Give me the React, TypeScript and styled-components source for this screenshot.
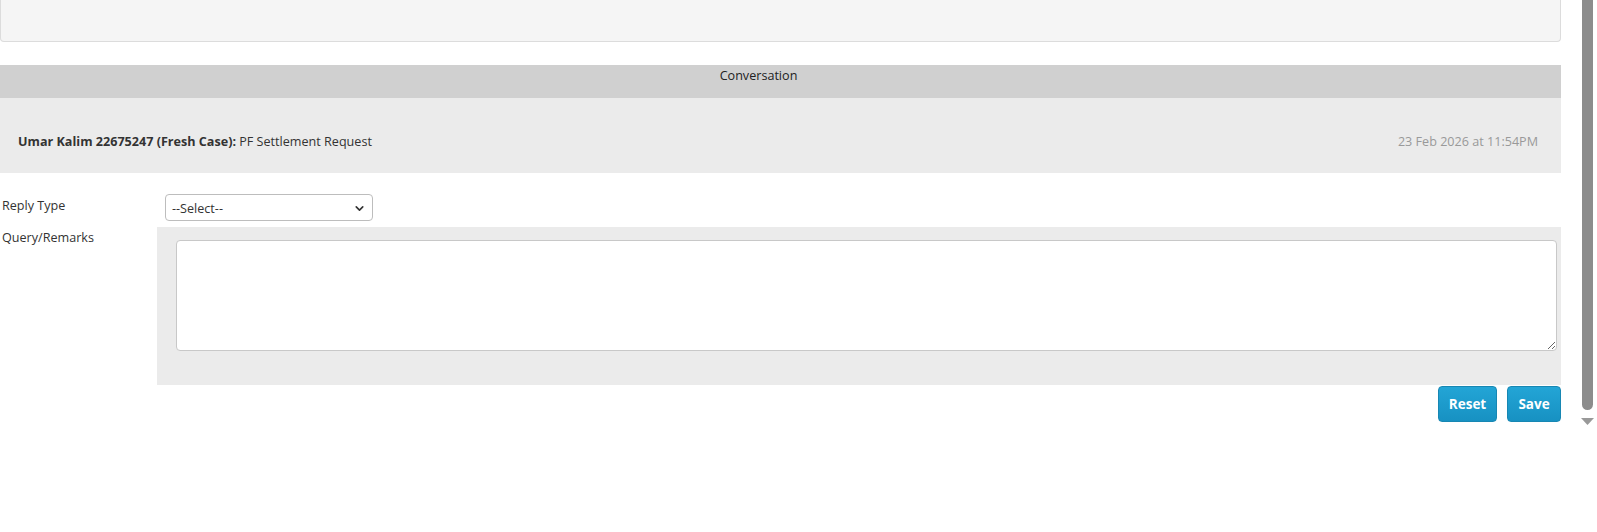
import React from "react";
import styled, { createGlobalStyle } from "styled-components";
import { ChevronDown } from "lucide-react";

const GlobalStyle = createGlobalStyle`
  html, body {
    margin: 0;
    padding: 0;
    background: #fff;
  }
  body {
    font-family: "Open Sans", "Liberation Sans", sans-serif;
    font-size: 12.6px;
    color: #333;
  }
`;

const Page = styled.div`
  display: flex;
  width: 1597px;
  height: 532px;
  overflow: hidden;
`;

const Main = styled.div`
  display: flex;
  flex-direction: column;
  width: 1561px;
`;

const TopPanel = styled.div`
  height: 41px;
  background: #f5f5f5;
  border: 1px solid #dcdcdc;
  border-top: none;
  border-radius: 0 0 4px 4px;
`;

const ConversationHeader = styled.div`
  margin-top: 23px;
  height: 33px;
  box-sizing: border-box;
  padding: 2px 44px 0 0;
  background: #d0d0d0;
  text-align: center;
  line-height: 17px;
  color: #222;
`;

const MessageRow = styled.div`
  display: flex;
  justify-content: space-between;
  height: 75px;
  box-sizing: border-box;
  padding: 35px 23px 0 18px;
  background: #ebebeb;
  line-height: 17px;
`;

const Sender = styled.span`
  font-weight: 700;
`;

const Stamp = styled.span`
  color: #999;
`;

const Form = styled.div`
  display: grid;
  grid-template-columns: 157px 1fr;
  margin-top: 21px;
`;

const Label = styled.div<{ $top: number }>`
  padding: ${(p) => p.$top}px 0 0 2px;
  line-height: 17px;
`;

const SelectWrap = styled.div`
  position: relative;
  width: 208px;
  margin-left: 8px;
`;

const Select = styled.select`
  appearance: none;
  width: 100%;
  height: 27px;
  box-sizing: border-box;
  padding: 2px 24px 0 6px;
  border: 1px solid #bdbdbd;
  border-radius: 4px;
  background: #fff;
  font-family: inherit;
  font-size: 12.6px;
  color: #333;
`;

const Chevron = styled(ChevronDown)`
  position: absolute;
  right: 7px;
  top: 8px;
  pointer-events: none;
  color: #333;
`;

const RemarksArea = styled.div`
  margin-top: 6px;
  height: 158px;
  box-sizing: border-box;
  padding: 13px 4px 0 19px;
  background: #ebebeb;
`;

const TextArea = styled.textarea`
  display: block;
  width: 100%;
  height: 111px;
  box-sizing: border-box;
  border: 1px solid #c8c8c8;
  border-radius: 4px;
  background: #fff;
  font-family: inherit;
  font-size: 12.6px;
  padding: 6px;
  outline: none;
`;

const Actions = styled.div`
  display: flex;
  justify-content: flex-end;
  gap: 10px;
  margin-top: 1px;
`;

const Button = styled.button<{ $w: number }>`
  width: ${(p) => p.$w}px;
  height: 36px;
  border: 1px solid #1787b3;
  border-radius: 4px;
  background: linear-gradient(#23a5d6, #1791c2);
  color: #fff;
  font-family: inherit;
  font-size: 13.5px;
  font-weight: 700;
  cursor: pointer;
`;

const ScrollRail = styled.div`
  display: flex;
  flex-direction: column;
  align-items: flex-start;
  width: 36px;
  padding-left: 21px;
  box-sizing: border-box;
`;

const Thumb = styled.div`
  width: 11px;
  height: 410px;
  background: #8c8c8c;
  border-radius: 0 0 6px 6px;
`;

const ArrowDown = styled.svg`
  margin: 8px 0 0 -1px;
`;

const App: React.FC = () => {
  return (
    <>
      <GlobalStyle />
      <Page>
        <Main>
          <TopPanel />
          <ConversationHeader>Conversation</ConversationHeader>
          <MessageRow>
            <span>
              <Sender>Umar Kalim 22675247 (Fresh Case):</Sender> PF Settlement Request
            </span>
            <Stamp>23 Feb 2026 at 11:54PM</Stamp>
          </MessageRow>
          <Form>
            <Label $top={3}>Reply Type</Label>
            <SelectWrap>
              <Select defaultValue="">
                <option value="">--Select--</option>
                <option value="reply">Reply</option>
                <option value="close">Close</option>
              </Select>
              <Chevron size={13} strokeWidth={3} />
            </SelectWrap>
            <Label $top={8}>Query/Remarks</Label>
            <RemarksArea>
              <TextArea />
            </RemarksArea>
            <div />
            <Actions>
              <Button $w={59}>Reset</Button>
              <Button $w={54}>Save</Button>
            </Actions>
          </Form>
        </Main>
        <ScrollRail>
          <Thumb />
          <ArrowDown width="13" height="7" viewBox="0 0 13 7">
            <path d="M0 0 H13 L6.5 7 Z" fill="#999" />
          </ArrowDown>
        </ScrollRail>
      </Page>
    </>
  );
};

export default App;
